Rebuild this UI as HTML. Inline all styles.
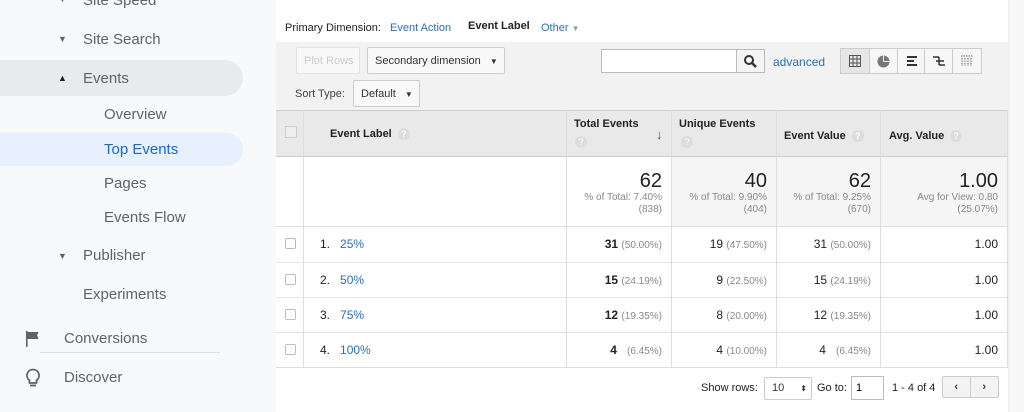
<!DOCTYPE html>
<html><head><meta charset="utf-8"><style>
*{box-sizing:border-box;margin:0;padding:0}
body{width:1024px;height:412px;overflow:hidden;position:relative;background:#fff;font-family:"Liberation Sans",Arial,sans-serif}
.sb{position:absolute;left:0;top:0;width:276px;height:412px;background:#f8f9fa}
.sb div{position:absolute;font-size:15px;color:#5f6368;white-space:nowrap}
.pill{position:absolute;left:0;border-radius:0 18px 18px 0}
.a{position:absolute;font-size:9px;color:#5f6368}
.main{position:absolute;left:276px;top:0;width:732px;height:412px;background:#fff}
.rs{position:absolute;left:1008px;top:0;width:16px;height:412px;background:#f7f7f7;border-left:1px solid #eee}
.t{position:absolute;font-size:11px;color:#222;white-space:nowrap}
.btn{position:absolute;border:1px solid #ccc;border-radius:2px;background:#f8f8f8;font-size:11px;color:#333;padding-left:7px}
.q{display:inline-block;width:12px;height:12px;border-radius:50%;background:#ddd;color:#fff;font-size:9px;text-align:center;line-height:12px;vertical-align:middle;margin-left:6px}
.cell{position:absolute;border-right:1px solid #ddd;border-bottom:1px solid #ddd}
.num{position:absolute;font-size:12px;color:#222;text-align:right;white-space:nowrap}
.num b{font-weight:bold}
.num span{color:#888;font-size:10px}
.cb{position:absolute;left:9px;width:11px;height:11px;border:1px solid #bbb;border-radius:2px;background:#fff}
</style></head><body>
<div class="sb">
 <div style="left:83px;top:-8px">Site Speed</div><span class="a" style="left:58px;top:-6px">▼</span>
 <span class="a" style="left:58px;top:34px">▼</span><div style="left:83px;top:31px">Site Search</div>
 <div class="pill" style="top:60px;width:243px;height:36px;background:#e8eaed"></div>
 <span class="a" style="left:58px;top:73px;color:#202124">▲</span><div style="left:83px;top:70px">Events</div>
 <div style="left:104px;top:106px">Overview</div>
 <div class="pill" style="top:133px;width:243px;height:33px;background:#e8f0fe"></div>
 <div style="left:104px;top:141px;color:#1967d2">Top Events</div>
 <div style="left:104px;top:175px">Pages</div>
 <div style="left:104px;top:209px">Events Flow</div>
 <span class="a" style="left:58px;top:251px">▼</span><div style="left:83px;top:247px">Publisher</div>
 <div style="left:83px;top:286px">Experiments</div>
 <svg style="position:absolute;left:24px;top:330px" width="18" height="18" viewBox="0 0 18 18"><path d="M2 1h1.6v16H2z M3.6 2h11l-1.5 3.5 1.5 3.5h-11z" fill="#5f6368"/></svg>
 <div style="left:64px;top:330px">Conversions</div>
 <div style="left:40px;top:352px;width:180px;height:1px;background:#e0e0e0"></div>
 <svg style="position:absolute;left:24px;top:368px" width="18" height="20" viewBox="0 0 18 20"><path d="M9 1.5a6 6 0 0 0-3.5 10.9V15h7v-2.6A6 6 0 0 0 9 1.5z" fill="none" stroke="#5f6368" stroke-width="1.8"/><path d="M6 17.5h6" stroke="#5f6368" stroke-width="1.8"/></svg>
 <div style="left:64px;top:369px">Discover</div>
</div>
<div class="main">
 <div style="position:absolute;left:0;top:42px;width:732px;height:68px;background:#f2f2f2"></div>
 <div class="t" style="left:9px;top:22px">Primary Dimension:</div>
 <div class="t" style="left:114px;top:22px;color:#2a6fb8">Event Action</div>
 <div class="t" style="left:192px;top:20px;font-weight:bold">Event Label</div>
 <div class="t" style="left:265px;top:22px;color:#2a6fb8">Other <span style="color:#999;font-size:8px">▼</span></div>
 <div class="btn" style="left:20px;top:47px;width:64px;height:27px;color:#ccc;line-height:27px;border-color:#e2e2e2">Plot Rows</div>
 <div class="btn" style="left:91px;top:47px;width:138px;height:27px;line-height:27px">Secondary dimension <span style="font-size:8px;margin-left:6px">▼</span></div>
 <div class="t" style="left:19px;top:88px;color:#444">Sort Type:</div>
 <div class="btn" style="left:77px;top:80px;width:67px;height:27px;line-height:27px">Default <span style="font-size:8px;margin-left:6px">▼</span></div>
 <div style="position:absolute;left:325px;top:49px;width:164px;height:24px;border:1px solid #bbb;background:#fff"></div>
 <div style="position:absolute;left:460px;top:49px;width:29px;height:24px;border:1px solid #bbb;background:#f5f5f5"><svg width="27" height="22" viewBox="0 0 27 22"><circle cx="12" cy="10" r="4" fill="none" stroke="#333" stroke-width="2"/><path d="M15 13l4 4" stroke="#333" stroke-width="2.5"/></svg></div>
 <div class="t" style="left:497px;top:55px;color:#2a6fb8;font-size:12px">advanced</div>
 <div style="position:absolute;left:564px;top:48px;width:142px;height:26px;border:1px solid #ccc;background:#f6f6f6;display:flex">
  <div style="width:29px;border-right:1px solid #ccc;background:#e6e6e6;position:relative"><svg style="position:absolute;left:8px;top:6px" width="12" height="12"><path d="M0.5 0.5h11v11h-11z M4 0.5v11 M8 0.5v11 M0.5 4h11 M0.5 8h11" fill="none" stroke="#555"/></svg></div>
  <div style="width:28px;border-right:1px solid #ccc;position:relative"><svg style="position:absolute;left:7px;top:6px" width="13" height="13"><circle cx="6.5" cy="6.5" r="6" fill="#777"/><path d="M6.5 6.5V0.5 M6.5 6.5h6" stroke="#eee"/></svg></div>
  <div style="width:28px;border-right:1px solid #ccc;position:relative"><svg style="position:absolute;left:9px;top:7px" width="11" height="11"><path d="M0 1h10M0 5h7M0 9h10" stroke="#333" stroke-width="2"/></svg></div>
  <div style="width:28px;border-right:1px solid #ccc;position:relative"><svg style="position:absolute;left:8px;top:6px" width="12" height="13"><path d="M0 2h6M3 6h8M6 10h6M6 2v8" stroke="#333" stroke-width="1.5" fill="none"/></svg></div>
  <div style="width:28px;position:relative"><svg style="position:absolute;left:8px;top:6px" width="12" height="12"><path d="M0 1h12M1 3v8M4 3v8M7 3v8M10 3v8" stroke="#666" stroke-dasharray="1.5 1" fill="none"/></svg></div>
 </div>
 <div style="position:absolute;left:0;top:110px;width:732px;height:47px;background:#e9e9e9;border-top:1px solid #ccc;border-bottom:1px solid #ccc"></div>
 <div class="cell" style="left:0;top:110px;width:28px;height:258px;border-bottom:none"></div>
 <div class="cell" style="left:28px;top:110px;width:263px;height:258px;border-bottom:none"></div>
 <div class="cell" style="left:291px;top:110px;width:105px;height:258px;border-bottom:none"></div>
 <div class="cell" style="left:396px;top:110px;width:105px;height:258px;border-bottom:none"></div>
 <div class="cell" style="left:501px;top:110px;width:104px;height:258px;border-bottom:none"></div>
 <div class="cell" style="left:605px;top:110px;width:127px;height:258px;border-bottom:none"></div>
 <div style="position:absolute;left:9px;top:126px;width:12px;height:12px;border:1px solid #ccc;background:#eee"></div>
 <div class="t" style="left:54px;top:128px;font-weight:bold">Event Label<span class="q">?</span></div>
 <div class="t" style="left:298px;top:118px;font-weight:bold">Total Events</div><span class="q" style="position:absolute;left:299px;top:136px;margin:0">?</span>
 <div style="position:absolute;left:380px;top:127px;font-size:13px;color:#555">↓</div>
 <div class="t" style="left:403px;top:118px;font-weight:bold">Unique Events</div><span class="q" style="position:absolute;left:405px;top:136px;margin:0">?</span>
 <div class="t" style="left:508px;top:130px;font-weight:bold">Event Value<span class="q">?</span></div>
 <div class="t" style="left:613px;top:130px;font-weight:bold">Avg. Value<span class="q">?</span></div>
 <div style="position:absolute;left:396px;top:157px;width:336px;height:69px;background:#f5f5f5"></div>
 <div style="position:absolute;left:0;top:226px;width:732px;height:1px;background:#ddd"></div>
 <div style="position:absolute;left:0;top:262px;width:732px;height:1px;background:#e4e4e4"></div>
 <div style="position:absolute;left:0;top:297px;width:732px;height:1px;background:#e4e4e4"></div>
 <div style="position:absolute;left:0;top:332px;width:732px;height:1px;background:#e4e4e4"></div>
 <div style="position:absolute;left:0;top:367px;width:732px;height:1px;background:#ddd"></div>
 <div style="position:absolute;left:395px;top:157px;width:1px;height:210px;background:#ddd"></div>
 <div style="position:absolute;left:500px;top:157px;width:1px;height:210px;background:#ddd"></div>
 <div style="position:absolute;left:604px;top:157px;width:1px;height:210px;background:#ddd"></div>
 <div style="position:absolute;left:731px;top:110px;width:1px;height:258px;background:#ddd"></div>
 <div class="num" style="right:346px;top:170px;font-size:20px">62</div>
 <div class="num" style="right:346px;top:192px;color:#888;font-size:10px;line-height:12px">% of Total: 7.40%<br>(838)</div>
 <div class="num" style="right:241px;top:170px;font-size:20px">40</div>
 <div class="num" style="right:241px;top:192px;color:#888;font-size:10px;line-height:12px">% of Total: 9.90%<br>(404)</div>
 <div class="num" style="right:137px;top:170px;font-size:20px">62</div>
 <div class="num" style="right:137px;top:192px;color:#888;font-size:10px;line-height:12px">% of Total: 9.25%<br>(670)</div>
 <div class="num" style="right:10px;top:170px;font-size:20px">1.00</div>
 <div class="num" style="right:10px;top:192px;color:#888;font-size:10px;line-height:12px">Avg for View: 0.80<br>(25.07%)</div>
 <div class="cb" style="top:238px"></div><div class="t" style="left:44px;top:237px;font-size:12px">1.&nbsp;&nbsp;&nbsp;<span style="color:#2a6fb8">25%</span></div>
 <div class="num" style="right:346px;top:237px"><b>31</b> <span>(50.00%)</span></div>
 <div class="num" style="right:241px;top:237px">19 <span>(47.50%)</span></div>
 <div class="num" style="right:137px;top:237px">31 <span>(50.00%)</span></div>
 <div class="num" style="right:10px;top:237px">1.00</div>
 <div class="cb" style="top:274px"></div><div class="t" style="left:44px;top:273px;font-size:12px">2.&nbsp;&nbsp;&nbsp;<span style="color:#2a6fb8">50%</span></div>
 <div class="num" style="right:346px;top:273px"><b>15</b> <span>(24.19%)</span></div>
 <div class="num" style="right:241px;top:273px">9 <span>(22.50%)</span></div>
 <div class="num" style="right:137px;top:273px">15 <span>(24.19%)</span></div>
 <div class="num" style="right:10px;top:273px">1.00</div>
 <div class="cb" style="top:309px"></div><div class="t" style="left:44px;top:308px;font-size:12px">3.&nbsp;&nbsp;&nbsp;<span style="color:#2a6fb8">75%</span></div>
 <div class="num" style="right:346px;top:308px"><b>12</b> <span>(19.35%)</span></div>
 <div class="num" style="right:241px;top:308px">8 <span>(20.00%)</span></div>
 <div class="num" style="right:137px;top:308px">12 <span>(19.35%)</span></div>
 <div class="num" style="right:10px;top:308px">1.00</div>
 <div class="cb" style="top:344px"></div><div class="t" style="left:44px;top:343px;font-size:12px">4.&nbsp;&nbsp;&nbsp;<span style="color:#2a6fb8">100%</span></div>
 <div class="num" style="right:346px;top:343px"><b>4</b>&nbsp;&nbsp; <span>(6.45%)</span></div>
 <div class="num" style="right:241px;top:343px">4 <span>(10.00%)</span></div>
 <div class="num" style="right:137px;top:343px">4&nbsp;&nbsp; <span>(6.45%)</span></div>
 <div class="num" style="right:10px;top:343px">1.00</div>
 <div class="t" style="left:425px;top:382px">Show rows:</div>
 <div class="btn" style="left:488px;top:377px;width:48px;height:23px;line-height:21px;background:#fff">10 <span style="position:absolute;right:4px;font-size:8px">⬍</span></div>
 <div class="t" style="left:541px;top:382px">Go to:</div>
 <div style="position:absolute;left:575px;top:376px;width:33px;height:24px;border:1px solid #bbb;background:#fff;font-size:11px;padding:5px 4px">1</div>
 <div class="t" style="left:616px;top:382px">1 - 4 of 4</div>
 <div style="position:absolute;left:666px;top:376px;width:57px;height:22px;border:1px solid #ccc;border-radius:2px;background:#f3f3f3;display:flex;font-size:11px;font-weight:bold;color:#333">
  <div style="width:28px;border-right:1px solid #ccc;text-align:center;line-height:20px">‹</div><div style="width:28px;text-align:center;line-height:20px">›</div></div>
</div>
<div class="rs"></div>
</body></html>
